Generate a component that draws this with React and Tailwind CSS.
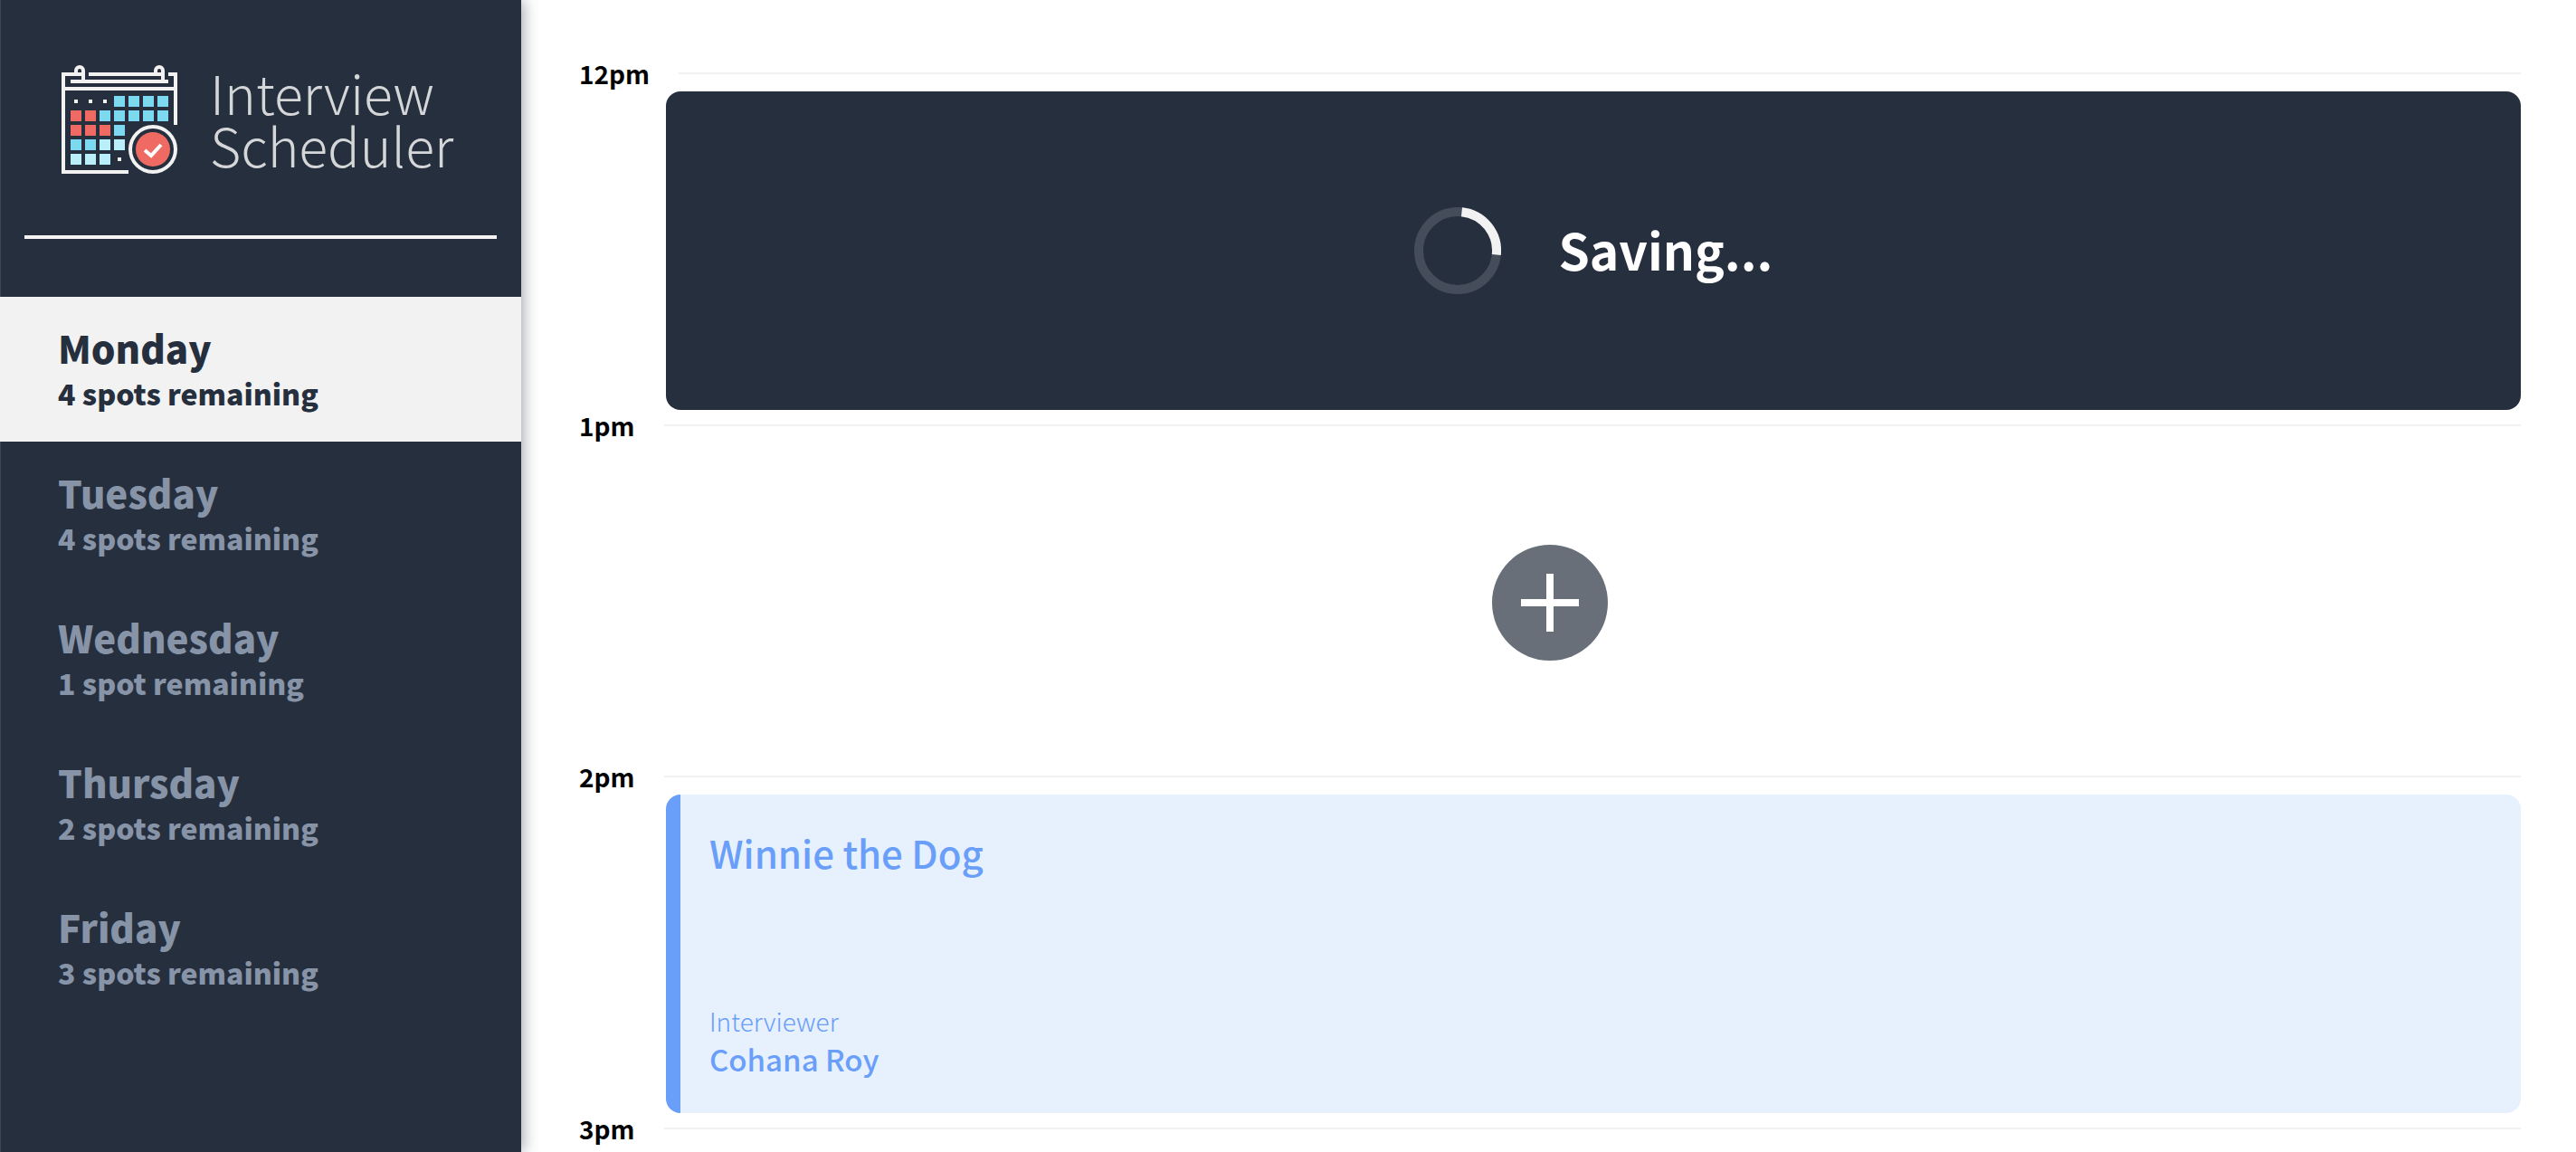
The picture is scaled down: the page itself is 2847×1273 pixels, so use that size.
const days = [
  { name: "Monday", spots: "4 spots remaining" },
  { name: "Tuesday", spots: "4 spots remaining" },
  { name: "Wednesday", spots: "1 spot remaining" },
  { name: "Thursday", spots: "2 spots remaining" },
  { name: "Friday", spots: "3 spots remaining" },
];

const BLUE = "#7cd9f0";
const PALE = "#b9effa";
const RED = "#ee6a62";

const cells = [
  [null, null, null, BLUE, BLUE, BLUE, BLUE],
  [RED, RED, BLUE, BLUE, BLUE, BLUE, BLUE],
  [RED, RED, RED, BLUE],
  [BLUE, BLUE, PALE, PALE],
  [PALE, PALE, PALE, null],
];

function CalendarLogo() {
  return (
    <svg viewBox="0 0 128 120" className="h-[120px] w-32 shrink-0" fill="none" stroke="#f2f2f2" strokeWidth="4" aria-hidden="true">
      <path d="M24 10H2V118H74M30 10H112M118 10H126V66M10 18H118M2 26H126" />
      <path d="M16 10V6a4 4 0 0 1 8 0V18M104 10V6a4 4 0 0 1 8 0V18" />
      {cells.map((row, r) =>
        row.map((color, c) =>
          color ? (
            <rect key={`${r}-${c}`} x={10 + c * 16} y={34 + r * 16} width="12" height="12" fill={color} stroke="none" />
          ) : (
            <rect key={`${r}-${c}`} x={14 + c * 16} y={38 + r * 16} width="4" height="4" fill="#f2f2f2" stroke="none" />
          )
        )
      )}
      <circle cx="101" cy="93" r="25" />
      <circle cx="101" cy="93" r="19" fill={RED} stroke="none" />
      <path d="M92 94l7 6 11-12" stroke="#ffffff" />
    </svg>
  );
}

function DayItem({ name, spots, selected }) {
  return (
    <li>
      <button
        type="button"
        className={
          "flex h-40 w-full flex-col justify-center pl-16 text-left font-black " +
          (selected ? "bg-[#f2f2f2] text-[#262f3e]" : "text-[#8794a7]")
        }
      >
        <span className="text-[42px] leading-[52px]">{name}</span>
        <span className="text-[32px] leading-12">{spots}</span>
      </button>
    </li>
  );
}

function Hour({ time }) {
  return (
    <header className="flex h-[37px] items-start gap-8">
      <h4 className="text-[28px] leading-[34px] font-bold text-black">{time}</h4>
      <hr className="mt-4 flex-1 border-t-2 border-[#f2f2f2]" />
    </header>
  );
}

export default function App() {
  return (
    <main className="flex h-screen overflow-hidden bg-white font-['Noto_Sans_CJK_SC',sans-serif]">
      <section className="z-10 w-xl shrink-0 bg-[#262f3e] shadow-[inset_1px_0_0_#3d4655,2px_0_16px_rgba(38,47,62,0.45)]">
        <h1 className="flex items-center gap-9 pt-[72px] pl-[68px] text-[#d4d6d8]">
          <CalendarLogo />
          <span className="mb-0.5 text-[59px] leading-[58px] font-light">
            Interview
            <br />
            Scheduler
          </span>
        </h1>
        <hr className="mx-[27px] mt-[68px] h-1 border-0 bg-[#f5f3f3]" />
        <nav className="mt-16">
          <ul>
            {days.map((day, i) => (
              <DayItem key={day.name} {...day} selected={i === 0} />
            ))}
          </ul>
        </nav>
      </section>

      <section className="flex-1 pt-16 pr-[61px] pl-16">
        <Hour time="12pm" />
        <article className="ml-24 flex h-[352px] items-center justify-center gap-16 rounded-2xl bg-[#262f3e]">
          <svg viewBox="0 0 96 96" className="size-24" fill="none" strokeWidth="10" role="img" aria-label="Loading">
            <circle cx="48" cy="48" r="43" stroke="#454d5a" />
            <path d="M52.5 5.2A43 43 0 0 1 90.8 52.5" stroke="#f2f2f2" />
          </svg>
          <h2 className="mb-1 text-[55px] leading-[72px] font-bold text-white">Saving...</h2>
        </article>

        <Hour time="1pm" />
        <article className="flex h-[351px] items-center justify-center">
          <button type="button" aria-label="Add appointment">
            <svg viewBox="0 0 128 128" className="size-32">
              <circle cx="64" cy="64" r="64" fill="#686f79" />
              <path d="M64 32V96M32 64H96" stroke="#ffffff" strokeWidth="8" />
            </svg>
          </button>
        </article>

        <Hour time="2pm" />
        <article className="ml-24 flex h-[352px] flex-col justify-between rounded-2xl border-l-16 border-[#699ef9] bg-[#e7f0fd] pt-[30px] pb-[38px] pl-8 text-[#699ef9]">
          <h2 className="text-[42px] leading-[68px] font-medium">Winnie the Dog</h2>
          <div>
            <h4 className="text-[28px] leading-10 font-light">Interviewer</h4>
            <h3 className="text-[33px] leading-11 font-medium">Cohana Roy</h3>
          </div>
        </article>

        <Hour time="3pm" />
      </section>
    </main>
  );
}
